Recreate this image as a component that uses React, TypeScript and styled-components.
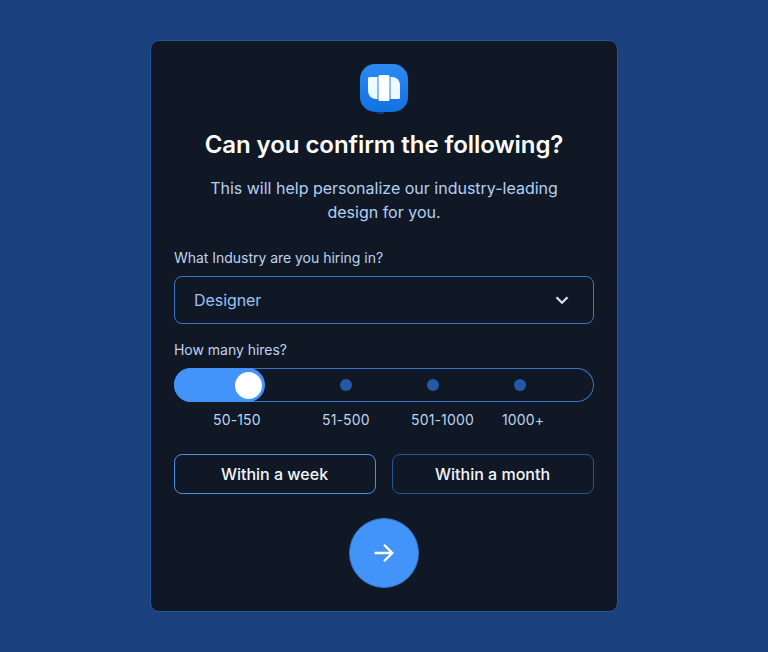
import React, { useState } from "react";
import styled, { createGlobalStyle } from "styled-components";

const GlobalStyle = createGlobalStyle`
  *, *::before, *::after { box-sizing: border-box; }
  body {
    margin: 0;
    background: #1a417e;
    font-family: Inter, "Liberation Sans", sans-serif;
  }
`;

const Page = styled.main`
  display: flex;
  justify-content: center;
  min-height: 652px;
  padding: 40px 0;
`;

const Card = styled.section`
  display: flex;
  flex-direction: column;
  align-items: center;
  width: 468px;
  height: 572px;
  padding: 23px;
  border: 1px solid #24539b;
  border-radius: 9px;
  background: #101826;
`;

const LogoMark = styled.svg`
  display: block;
  flex: none;
  width: 48px;
  height: 51px;
`;

const Title = styled.h1`
  margin: 13px 0 0;
  color: #fff;
  font-size: 24px;
  font-weight: 600;
  line-height: 34px;
  letter-spacing: -0.06px;
  white-space: nowrap;
`;

const Subtitle = styled.p`
  width: 372px;
  margin: 14px 0 0;
  color: #b3d0f3;
  font-size: 16px;
  line-height: 24px;
  text-align: center;
`;

const Label = styled.div<{ $top: number }>`
  align-self: flex-start;
  margin-top: ${(p) => p.$top}px;
  color: #bed3ee;
  font-size: 14px;
  line-height: 20px;
  letter-spacing: -0.03px;
`;

const Select = styled.button`
  display: flex;
  align-items: center;
  justify-content: space-between;
  flex: none;
  width: 100%;
  height: 48px;
  margin-top: 8px;
  padding: 0 21px 0 19px;
  border: 1px solid #3c75c4;
  border-radius: 8px;
  background: transparent;
  color: #9bc2f2;
  font: 400 16px/24px Inter, sans-serif;
  letter-spacing: -0.06px;
`;

const Track = styled.div`
  display: grid;
  grid-template-columns: 91px 75px repeat(2, 87px) 1fr;
  align-items: center;
  flex: none;
  width: 100%;
  height: 34px;
  margin-top: 8px;
  border-radius: 17px;
  box-shadow: inset 0 0 0 1px #3c75c4;
`;

const Fill = styled.div`
  display: flex;
  align-items: center;
  justify-content: flex-end;
  height: 34px;
  padding-right: 3px;
  border-radius: 17px;
  background: #4294f8;
`;

const Thumb = styled.div`
  width: 27px;
  height: 27px;
  border-radius: 50%;
  background: #fff;
`;

const Dot = styled.span`
  width: 12px;
  height: 12px;
  justify-self: end;
  transform: translateX(12px);
  border-radius: 50%;
  background: #2458a8;
`;

const Ticks = styled.div`
  display: grid;
  grid-template-columns: 109px 89px 91px auto;
  align-self: stretch;
  margin-top: 8px;
  padding-left: 39px;
  color: #bed3ee;
  font-size: 14px;
  line-height: 20px;
  letter-spacing: 0.15px;
`;

const Choices = styled.div`
  display: grid;
  grid-template-columns: 1fr 1fr;
  gap: 16px;
  width: 100%;
  margin-top: 24px;
`;

const Choice = styled.button<{ $active: boolean }>`
  height: 40px;
  padding: 0 1px 0 0;
  border: 1px solid ${(p) => (p.$active ? "#4890e8" : "#24539b")};
  border-radius: 8px;
  background: transparent;
  color: #f3f7fd;
  font: 500 16px/24px Inter, sans-serif;
`;

const Next = styled.button`
  display: grid;
  place-items: center;
  flex: none;
  width: 70px;
  height: 70px;
  margin-top: 24px;
  padding: 0;
  border: 1px solid #3776cb;
  border-radius: 50%;
  background: #4294f8;
`;

function Logo() {
  return (
    <LogoMark viewBox="0 0 48 51" aria-hidden="true">
      <defs>
        <linearGradient id="badge" x1="0" y1="0" x2="0" y2="1">
          <stop offset="0" stopColor="#2c8af2" />
          <stop offset="1" stopColor="#1272e2" />
        </linearGradient>
      </defs>
      <rect x="17" y="44" width="7" height="6" fill="#0c3972" />
      <rect width="48" height="48" rx="15" fill="url(#badge)" />
      <path d="M9.500 13H17.500v22H16A8 8 0 0 1 8 27V14.500A1.500 1.500 0 0 1 9.500 13z" fill="#eefaff" />
      <rect x="18.500" y="11" width="11" height="26" rx="1.500" fill="#fff" />
      <path d="M30.500 13H32a8 8 0 0 1 8 8v12.500a1.500 1.500 0 0 1-1.500 1.500h-8z" fill="#eefaff" />
    </LogoMark>
  );
}

const ranges = ["50-150", "51-500", "501-1000", "1000+"];
const timings = ["Within a week", "Within a month"];

export default function App() {
  const [timing, setTiming] = useState(timings[0]);
  return (
    <>
      <GlobalStyle />
      <Page>
        <Card>
          <Logo />
          <Title>Can you confirm the following?</Title>
          <Subtitle>This will help personalize our industry-leading design for you.</Subtitle>
          <Label $top={24}>What Industry are you hiring in?</Label>
          <Select>
            Designer
            <svg width="20" height="20" viewBox="0 0 20 20" fill="none" stroke="#d3e5fc" strokeWidth="2.200">
              <path d="M4.500 7.200 10 12.700l5.500-5.500" />
            </svg>
          </Select>
          <Label $top={16}>How many hires?</Label>
          <Track>
            <Fill>
              <Thumb />
            </Fill>
            <Dot />
            <Dot />
            <Dot />
          </Track>
          <Ticks>
            {ranges.map((range) => (
              <span key={range}>{range}</span>
            ))}
          </Ticks>
          <Choices>
            {timings.map((name) => (
              <Choice key={name} $active={name === timing} onClick={() => setTiming(name)}>
                {name}
              </Choice>
            ))}
          </Choices>
          <Next aria-label="Continue">
            <svg width="24" height="24" viewBox="0 0 24 24" fill="none" stroke="#fff" strokeWidth="2.300">
              <path d="M2.500 12h17.500M12 3.700 20.300 12 12 20.300" />
            </svg>
          </Next>
        </Card>
      </Page>
    </>
  );
}
